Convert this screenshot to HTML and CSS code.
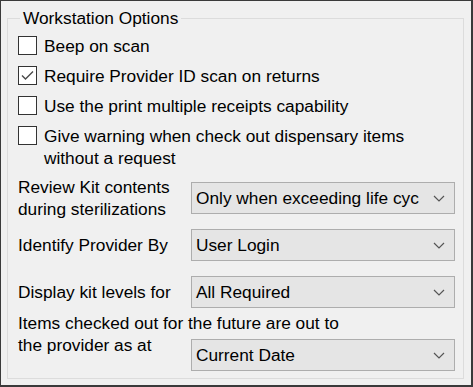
FILE: index.html
```html
<!DOCTYPE html>
<html lang="en">
<head>
    <meta charset="UTF-8">
    <title>Workstation Options</title>
    <link rel="stylesheet" href="styles.css">
</head>
<body>

    <div class="window">
        <fieldset class="group">
            <legend>Workstation Options</legend>

            <div class="check">
                <span class="box"></span>
                <span>Beep on scan</span>
            </div>
            <div class="check">
                <span class="box">
                    <svg width="19" height="19" viewBox="0 0 19 19"><path d="M4 9.5 L7.5 13 L15 5.5" fill="none" stroke="#4a4a4a" stroke-width="1.4"/></svg>
                </span>
                <span>Require Provider ID scan on returns</span>
            </div>
            <div class="check">
                <span class="box"></span>
                <span>Use the print multiple receipts capability</span>
            </div>
            <div class="check">
                <span class="box"></span>
                <span>Give warning when check out dispensary items<br>without a request</span>
            </div>

            <!-- combo rows -->
            <div class="field first">
                <label>Review Kit contents<br>during sterilizations</label>
                <div class="combo"><span>Only when exceeding life cyc</span><svg class="chev" width="12" height="7" viewBox="0 0 12 7"><path d="M1 1 L6 6 L11 1" fill="none" stroke="#555" stroke-width="1.2"/></svg></div>
            </div>
            <div class="field">
                <label>Identify Provider By</label>
                <div class="combo"><span>User Login</span><svg class="chev" width="12" height="7" viewBox="0 0 12 7"><path d="M1 1 L6 6 L11 1" fill="none" stroke="#555" stroke-width="1.2"/></svg></div>
            </div>
            <div class="field wide">
                <label>Display kit levels for</label>
                <div class="combo"><span>All Required</span><svg class="chev" width="12" height="7" viewBox="0 0 12 7"><path d="M1 1 L6 6 L11 1" fill="none" stroke="#555" stroke-width="1.2"/></svg></div>
            </div>
            <div class="long-label">Items checked out for the future are out to</div>
            <div class="field last">
                <label>the provider as at</label>
                <div class="combo"><span>Current Date</span><svg class="chev" width="12" height="7" viewBox="0 0 12 7"><path d="M1 1 L6 6 L11 1" fill="none" stroke="#555" stroke-width="1.2"/></svg></div>
            </div>
        </fieldset>
    </div>

</body>
</html>
```

FILE: styles.css
```css
body {
    margin: 0;
    font-family: "Liberation Sans", Arial, sans-serif;
    font-size: 17.3px;
    line-height: 22px;
    color: #000;
}
.window {
    width: 473px;
    height: 387px;
    box-sizing: border-box;
    background-color: #f0f0f0;
    border: 1px solid #3a3a3a;
    border-right-width: 2px;
    border-bottom-width: 2px;
    padding: 6px 7px 0 6px;
}
.group {
    margin: 0;
    height: 372px;
    box-sizing: border-box;
    border: 1px solid #dcdcdc;
    padding: 6px 8px 0 10px;
}
.group legend {
    padding: 0 3px;
    margin-left: 2px;
    line-height: 22px;
}
.check {
    display: flex;
    align-items: flex-start;
    gap: 7px;
    margin-bottom: 8px;
}
.box {
    flex: none;
    width: 17px;
    height: 17px;
    margin-top: 1px;
    border: 1px solid #333;
    background-color: #fff;
    position: relative;
}
.box svg {
    position: absolute;
    left: -1px;
    top: -1px;
}
.field {
    display: grid;
    grid-template-columns: 173px 264px;
    align-items: center;
    margin-bottom: 9px;
}
.field.first {
    margin-top: -1px;
}
.field.wide {
    margin-top: 15px;
    margin-bottom: 4px;
}
.field.last {
    align-items: start;
}
.field.last .combo {
    margin-top: 5px;
}
.combo {
    height: 32px;
    box-sizing: border-box;
    border: 1px solid #adadad;
    background-color: #e5e5e5;
    display: flex;
    align-items: center;
    justify-content: space-between;
    padding: 0 9px 0 4px;
    white-space: nowrap;
    overflow: hidden;
}
.chev {
    flex: none;
}
```
